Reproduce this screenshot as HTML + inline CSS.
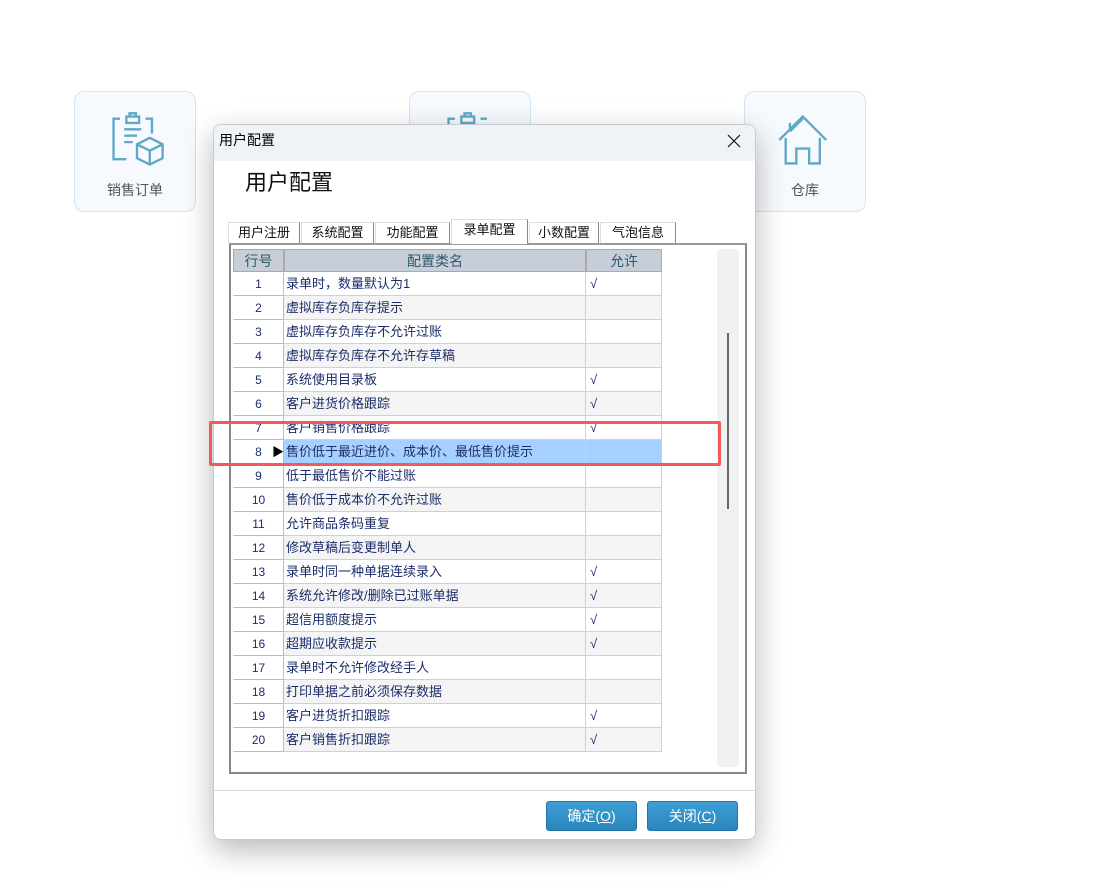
<!DOCTYPE html><html><head><meta charset="utf-8"><style>
*{box-sizing:border-box;margin:0;padding:0}
body{width:1120px;height:890px;background:#fff;position:relative;overflow:hidden;font-family:"Liberation Sans","Noto Sans CJK SC",sans-serif}
.card{position:absolute;top:91px;width:122px;height:121px;background:#f6f9fd;border:1px solid #d3e6ef;border-radius:10px;text-align:center;color:#555;font-size:14px}
.card span{position:absolute;left:0;right:0;top:88px}
.card svg{position:absolute;left:30px;top:16px}
.dlg{position:absolute;left:213px;top:124px;width:543px;height:716px;background:#fff;border:1px solid #c8ccd0;border-radius:8px;box-shadow:0 10px 30px rgba(0,0,0,.28);overflow:hidden}
.tb{height:36px;background:#eef3f8;font-size:14px;line-height:30px;padding-left:5px;color:#000;position:relative}
.x{position:absolute;right:14px;top:9px}
.h{position:absolute;left:31px;top:40px;font-size:22px;color:#111}
.tabs{position:absolute;left:14px;top:94px;height:24px;font-size:13px}
.tab{position:absolute;top:3px;height:21px;border:1px solid #888;border-bottom:none;border-top-color:#ddd;border-left-color:#ddd;background:#fff;line-height:20px;text-align:center;color:#111}
.frame{position:absolute;left:15px;top:118px;width:518px;height:531px;border:2px solid #888;border-top-color:#999;background:#fff}
.grid{position:absolute;left:2px;top:4px;width:429px;font-size:13px;color:#1c2d6b}
.row{position:absolute;left:0;height:24px;width:429px}
.c{position:absolute;top:0;height:24px;line-height:23px;border-right:1px solid #d0d0d0;border-bottom:1px solid #d0d0d0}
.sb{position:absolute;left:486px;top:4px;width:22px;height:518px;background:#f1f1f1}
.btn{position:absolute;top:676px;width:91px;height:30px;background:linear-gradient(#3d9fd4,#2a85bd);border:1px solid #2476a8;border-radius:3px;color:#fff;font-size:14px;text-align:center;line-height:28px}
</style></head><body>
<div class="card" style="left:74px"><svg width="64" height="64" viewBox="0 0 60 60" fill="none" stroke="#5fa8c9" stroke-width="2.2"><path d="M14 10h-6v38h12M38 10h6v14M20 8h12v6H20zM23 8v-3h6v3M18 20h16M18 26h12M18 32h8M30 34l12-6 12 6v13l-12 6-12-6zM30 34l12 6 12-6M42 40v13"/></svg><span>销售订单</span></div>
<div class="card" style="left:409px"><svg width="64" height="64" viewBox="0 0 60 60" fill="none" stroke="#5fa8c9" stroke-width="2.2"><path d="M14 10h-6v38M38 10h6M20 8h12v6H20zM23 8v-3h6v3"/></svg></div>
<div class="card" style="left:744px"><svg width="64" height="64" viewBox="0 0 60 60" fill="none" stroke="#5fa8c9" stroke-width="2.2"><path d="M4 30L26 8l22 22M10 28v24h10V38h12v14h10V28M14 14v8M14 22l12-12"/></svg><span>仓库</span></div>
<div class="dlg">
<div class="tb">用户配置<svg class="x" width="14" height="14" viewBox="0 0 14 14" stroke="#111" stroke-width="1.2"><path d="M1 1L13 13M13 1L1 13"/></svg></div>
<div class="h">用户配置</div>
<div class="tabs">
<div class="tab" style="left:0;width:72px">用户注册</div>
<div class="tab" style="left:73px;width:73px">系统配置</div>
<div class="tab" style="left:147px;width:75px">功能配置</div>
<div class="tab" style="left:223px;top:0;height:25px;width:77px;z-index:2">录单配置</div>
<div class="tab" style="left:301px;width:70px">小数配置</div>
<div class="tab" style="left:372px;width:76px">气泡信息</div>
</div>
<div class="frame">
<div class="grid">
<div class="row" style="top:0;height:23px;font-size:14px;color:#2c5a6e;text-align:center">
<div class="c" style="left:0;width:51px;background:#c8ced8;height:23px;border:1px solid #aaa">行号</div>
<div class="c" style="left:51px;width:302px;background:#c8ced8;height:23px;border:1px solid #aaa">配置类名</div>
<div class="c" style="left:353px;width:76px;background:#c8ced8;height:23px;border:1px solid #aaa">允许</div>
</div>
</div>
<div class="sb"><div style="position:absolute;left:10px;top:84px;width:2px;height:176px;background:#666"></div></div>
</div>
<div style="position:absolute;left:0;right:0;top:665px;border-top:1px solid #d8d8d8"></div>
<div class="btn" style="left:332px">确定(<u>O</u>)</div>
<div class="btn" style="left:433px">关闭(<u>C</u>)</div>
</div>
<div style="position:absolute;left:209px;top:421px;width:512px;height:45px;border:3px solid #f05a5a;border-radius:2px"></div>
<script>
var names=["录单时，数量默认为1","虚拟库存负库存提示","虚拟库存负库存不允许过账","虚拟库存负库存不允许存草稿","系统使用目录板","客户进货价格跟踪","客户销售价格跟踪","售价低于最近进价、成本价、最低售价提示","低于最低售价不能过账","售价低于成本价不允许过账","允许商品条码重复","修改草稿后变更制单人","录单时同一种单据连续录入","系统允许修改/删除已过账单据","超信用额度提示","超期应收款提示","录单时不允许修改经手人","打印单据之前必须保存数据","客户进货折扣跟踪","客户销售折扣跟踪"];
var ok=[1,0,0,0,1,1,1,0,0,0,0,0,1,1,1,1,0,0,1,1];
var g=document.querySelector('.grid'),h='';
for(var i=0;i<20;i++){var bg=i==7?'#a6d0ff':(i%2?'#f4f4f4':'#fff');
h+='<div class="row" style="top:'+(23+i*24)+'px"><div class="c" style="left:0;width:51px;background:#fff;border:1px solid #bbb;border-top-color:#fff;border-left-color:#fff;text-align:center;font-size:12px">'+(i+1)+(i==7?'<span style="position:absolute;left:38px;top:0;color:#000">▶</span>':'')+'</div><div class="c" style="left:51px;width:302px;background:'+bg+';padding-left:2px;white-space:nowrap">'+names[i]+'</div><div class="c" style="left:353px;width:76px;background:'+bg+';padding-left:4px;font-style:italic">'+(ok[i]?'√':'')+'</div></div>';}
g.innerHTML+=h;
</script>
</body></html>
